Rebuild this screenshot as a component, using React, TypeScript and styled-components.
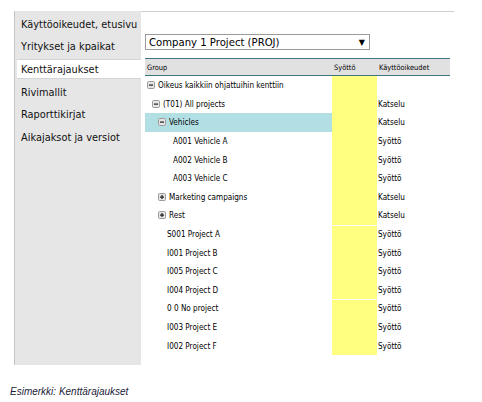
import { Fragment } from "react";
import styled, { createGlobalStyle } from "styled-components";

const Global = createGlobalStyle`
body {
  margin: 0;
  background: #ffffff;
}
`

const Page = styled.div`
width: 482px;
height: 402px;
display: flex;
flex-direction: column;
`
const Panel = styled.div`
display: flex;
margin-top: 11px;
margin-left: 14px;
height: 354px;
`
const Sidebar = styled.div`
width: 126px;
background: #e6e6e6;
border-left: 1px solid #c4c4c4;
padding-top: 2px;
display: flex;
flex-direction: column;
`
const NavItem = styled.div<{ $active?: boolean }>`
height: ${p => (p.$active ? "20px" : "22.6px")};
margin: ${p => (p.$active ? "1.3px 0 1.3px 2px" : "0")};
padding-left: ${p => (p.$active ? "4px" : "6px")};
display: flex;
align-items: center;
font-family: "DejaVu Sans", Verdana, sans-serif;
font-size: 9.8px;
color: #111;
background: ${p => (p.$active ? "#ffffff" : "transparent")};
border-top: ${p => (p.$active ? "1px solid #d4d4d4" : "none")};
border-bottom: ${p => (p.$active ? "1px solid #d4d4d4" : "none")};
box-sizing: border-box;
white-space: nowrap;
`
const Content = styled.div`
width: 309px;
border-top: 1px solid #cfcfcf;
padding-left: 4px;
padding-top: 22px;
display: flex;
flex-direction: column;
align-items: flex-start;
`
const Select = styled.div`
width: 225px;
height: 16px;
box-sizing: border-box;
border: 1px solid #9a9a9a;
display: flex;
align-items: center;
justify-content: space-between;
padding: 0 4px 0 3px;
font-family: "DejaVu Sans", Verdana, sans-serif;
font-size: 10.1px;
color: #000;
`
const Arrow = styled.span`
font-size: 8px;
`
const Table = styled.div`
margin-top: 8px;
width: 305px;
display: grid;
grid-template-columns: 187px 45px 73px;
font-family: "DejaVu Sans Condensed", "DejaVu Sans", sans-serif;
font-size: 8.1px;
color: #000;
`
const Head = styled.div`
height: 18px;
box-sizing: border-box;
background: #e1e1e1;
border-top: 1px solid #3d7480;
border-bottom: 1px solid #3d7480;
display: flex;
align-items: center;
padding-left: 2px;
font-size: 7.4px;
`
const GroupCell = styled.div<{ $indent: number; $hl?: boolean }>`
height: 18.6px;
display: flex;
align-items: center;
gap: 3px;
padding-left: ${p => p.$indent}px;
background: ${p => (p.$hl ? "#b2dfe4" : "transparent")};
white-space: nowrap;
`
const InputCell = styled.div<{ $split?: boolean }>`
height: 18.6px;
box-sizing: border-box;
background: #ffff80;
border-top: ${p => (p.$split ? "1px solid #ffffff" : "none")};
`
const RightCell = styled.div`
height: 18.6px;
display: flex;
align-items: center;
padding-left: 1px;
`
const Caption = styled.div`
margin-top: 21px;
margin-left: 10px;
font-family: "Liberation Sans", Arial, sans-serif;
font-style: italic;
font-size: 10px;
color: #1c1c3a;
`

const Toggle = ({ open }: { open: boolean }) => (
  <svg width="8" height="8" viewBox="0 0 8 8">
    <rect x="0.5" y="0.5" width="7" height="7" rx="1" fill="#e4e4e4" stroke="#9b9b9b" />
    <rect x="2" y="3.5" width="4" height="1.2" fill="#222" />
    {!open && <rect x="3.4" y="2" width="1.2" height="4" fill="#222" />}
  </svg>
);

type Row = {
  label: string;
  indent: number;
  toggle?: "open" | "closed";
  right?: string;
  hl?: boolean;
  split?: boolean;
};

const rows: Row[] = [
  { label: "Oikeus kaikkiin ohjattuihin kenttiin", indent: 2, toggle: "open" },
  { label: "(T01) All projects", indent: 7, toggle: "open", right: "Katselu" },
  { label: "Vehicles", indent: 13, toggle: "open", right: "Katselu", hl: true },
  { label: "A001 Vehicle A", indent: 28, right: "Syöttö" },
  { label: "A002 Vehicle B", indent: 28, right: "Syöttö" },
  { label: "A003 Vehicle C", indent: 28, right: "Syöttö" },
  { label: "Marketing campaigns", indent: 13, toggle: "closed", right: "Katselu" },
  { label: "Rest", indent: 13, toggle: "closed", right: "Katselu" },
  { label: "S001 Project A", indent: 22, right: "Syöttö", split: true },
  { label: "I001 Project B", indent: 22, right: "Syöttö" },
  { label: "I005 Project C", indent: 22, right: "Syöttö" },
  { label: "I004 Project D", indent: 22, right: "Syöttö" },
  { label: "0 0 No project", indent: 22, right: "Syöttö", split: true },
  { label: "I003 Project E", indent: 22, right: "Syöttö" },
  { label: "I002 Project F", indent: 22, right: "Syöttö" },
];

const navItems = [
  "Käyttöoikeudet, etusivu",
  "Yritykset ja kpaikat",
  "Kenttärajaukset",
  "Rivimallit",
  "Raporttikirjat",
  "Aikajaksot ja versiot",
];

const App = () => {
  return (
    <Page>
      <Global />
      <Panel>
        <Sidebar>
          {navItems.map(n => (
            <NavItem key={n} $active={n === "Kenttärajaukset"}>{n}</NavItem>
          ))}
        </Sidebar>
        <Content>
          <Select>
            <span>Company 1 Project (PROJ)</span>
            <Arrow>▼</Arrow>
          </Select>
          <Table>
            <Head>Group</Head>
            <Head>Syöttö</Head>
            <Head>Käyttöoikeudet</Head>
            {rows.map(r => (
              <Fragment key={r.label}>
                <GroupCell $indent={r.indent} $hl={r.hl}>
                  {r.toggle && <Toggle open={r.toggle === "open"} />}
                  <span>{r.label}</span>
                </GroupCell>
                <InputCell $split={r.split} />
                <RightCell>{r.right}</RightCell>
              </Fragment>
            ))}
          </Table>
        </Content>
      </Panel>
      <Caption>Esimerkki: Kenttärajaukset</Caption>
    </Page>
  );
};

export default App;
